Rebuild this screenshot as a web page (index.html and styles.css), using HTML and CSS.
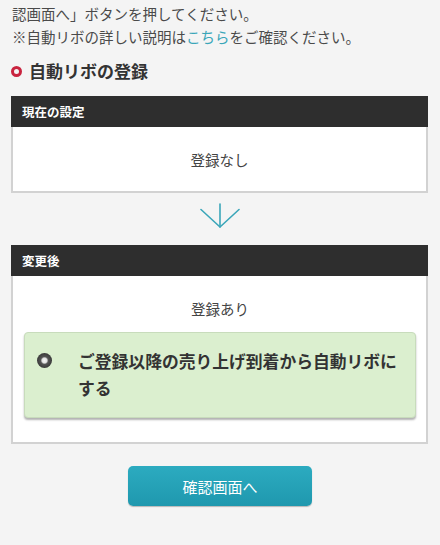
FILE: index.html
```html
<!DOCTYPE html>
<html lang="ja">
<head>
<meta charset="utf-8">
<link rel="stylesheet" href="styles.css">
</head>
<body>
<div class="page">
  <p class="intro">認画面へ」ボタンを押してください。<br>※自動リボの詳しい説明は<a class="link" href="#">こちら</a>をご確認ください。</p>
  <h2 class="heading"><span class="ring"></span>自動リボの登録</h2>

  <div class="box">
    <div class="box-head">現在の設定</div>
    <div class="box-body current">登録なし</div>
  </div>

  <div class="arrow">
    <svg width="40" height="26" viewBox="0 0 40 26" fill="none" stroke="#3aa6b9" stroke-width="1.6" stroke-linecap="round" stroke-linejoin="round">
      <path d="M20 1 V24"/>
      <path d="M1 6.5 L20 24 L39 6.5"/>
    </svg>
  </div>

  <div class="box">
    <div class="box-head">変更後</div>
    <div class="box-body after">
      <div class="after-label">登録あり</div>
      <div class="option">
        <span class="radio"></span>
        <span class="option-text">ご登録以降の売り上げ到着から自動リボにする</span>
      </div>
    </div>
  </div>

  <div class="actions">
    <button class="btn" type="button">確認画面へ</button>
  </div>
</div>
</body>
</html>
```

FILE: styles.css
```css
html, body {
  margin: 0;
  padding: 0;
  background: #f4f4f4;
}
body {
  font-family: "Noto Sans CJK JP", "Noto Sans", sans-serif;
  color: #444;
}
.page {
  padding: 2px 12px 0 11px;
}
.intro {
  margin: 0 0 0 1px;
  font-size: 14.5px;
  line-height: 23px;
  color: #4a4a4a;
}
.link {
  color: #3aa6b9;
  text-decoration: none;
}
.heading {
  margin: 11px 0 13px 0;
  font-size: 17px;
  line-height: 24px;
  font-weight: 700;
  color: #333;
  display: flex;
  align-items: center;
}
.ring {
  width: 5px;
  height: 5px;
  border: 3px solid #c9243f;
  border-radius: 50%;
  margin-right: 7px;
  flex: none;
}
.box {
  border: 2px solid #d2d2d2;
  background: #fff;
}
.box-head {
  background: #2e2e2e;
  color: #fff;
  font-size: 12.5px;
  font-weight: 700;
  height: 30px;
  line-height: 30px;
  padding-left: 11px;
  margin: -2px -2px 0 -2px;
  padding-top: 1px;
}
.box-body.current {
  height: 64px;
  display: flex;
  align-items: center;
  justify-content: center;
  font-size: 14.5px;
  color: #444;
}
.arrow {
  height: 52px;
  display: flex;
  justify-content: center;
  align-items: flex-start;
}
.arrow svg {
  margin-top: 10px;
  display: block;
}
.box-body.after {
  padding: 21px 10px 24px 11px;
}
.after-label {
  text-align: center;
  font-size: 14.5px;
  line-height: 24px;
  color: #444;
  margin-bottom: 11px;
}
.option {
  background: #dbefcf;
  border: 1px solid #c8dcbc;
  border-radius: 4px;
  box-shadow: 0 2px 2px rgba(0, 0, 0, 0.3);
  display: flex;
  align-items: flex-start;
  padding: 15px 4px 15px 12px;
}
.radio {
  flex: none;
  width: 15px;
  height: 15px;
  border-radius: 50%;
  background: radial-gradient(circle, #f6f6f6 0, #e2e2e2 2.5px, #555 3.8px, #3a3a3a 7.5px);
  margin-top: 5px;
  margin-right: 26px;
}
.option-text {
  font-size: 16.8px;
  line-height: 27px;
  font-weight: 700;
  color: #333;
}
.actions {
  display: flex;
  justify-content: center;
  padding-top: 22px;
  padding-bottom: 40px;
}
.btn {
  width: 184px;
  height: 40px;
  border: none;
  border-radius: 5px;
  background: linear-gradient(#2cabc0, #1f98ae);
  box-shadow: 0 1px 1px rgba(0, 0, 0, 0.25);
  color: #fff;
  font-family: "Noto Sans CJK JP", "Noto Sans", sans-serif;
  font-size: 15px;
  margin-left: 1px;
}
```
